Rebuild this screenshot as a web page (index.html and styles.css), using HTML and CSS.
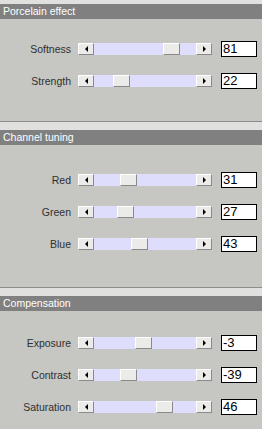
FILE: index.html
```html
<!DOCTYPE html>
<html>
<head>
<meta charset="utf-8">
<link rel="stylesheet" href="styles.css">
</head>
<body>
<div class="panel">
  <div class="band band-top"></div>
  <div class="head">Porcelain effect</div>
  <div class="rows rows-1">
    <div class="row"><span class="label">Softness</span><div class="slider"><span class="btn btn-l"><i class="tri tri-l"></i></span><span class="track"><span class="thumb" style="left:69px"></span></span><span class="btn btn-r"><i class="tri tri-r"></i></span></div><span class="val">81</span></div>
    <div class="row"><span class="label">Strength</span><div class="slider"><span class="btn btn-l"><i class="tri tri-l"></i></span><span class="track"><span class="thumb" style="left:19px"></span></span><span class="btn btn-r"><i class="tri tri-r"></i></span></div><span class="val">22</span></div>
  </div>
  <div class="band"></div>
  <div class="head">Channel tuning</div>
  <div class="rows rows-2">
    <div class="row"><span class="label">Red</span><div class="slider"><span class="btn btn-l"><i class="tri tri-l"></i></span><span class="track"><span class="thumb" style="left:26px"></span></span><span class="btn btn-r"><i class="tri tri-r"></i></span></div><span class="val">31</span></div>
    <div class="row"><span class="label">Green</span><div class="slider"><span class="btn btn-l"><i class="tri tri-l"></i></span><span class="track"><span class="thumb" style="left:23px"></span></span><span class="btn btn-r"><i class="tri tri-r"></i></span></div><span class="val">27</span></div>
    <div class="row"><span class="label">Blue</span><div class="slider"><span class="btn btn-l"><i class="tri tri-l"></i></span><span class="track"><span class="thumb" style="left:37px"></span></span><span class="btn btn-r"><i class="tri tri-r"></i></span></div><span class="val">43</span></div>
  </div>
  <div class="band"></div>
  <div class="head">Compensation</div>
  <div class="rows rows-3">
    <div class="row"><span class="label">Exposure</span><div class="slider"><span class="btn btn-l"><i class="tri tri-l"></i></span><span class="track"><span class="thumb" style="left:41px"></span></span><span class="btn btn-r"><i class="tri tri-r"></i></span></div><span class="val">-3</span></div>
    <div class="row"><span class="label">Contrast</span><div class="slider"><span class="btn btn-l"><i class="tri tri-l"></i></span><span class="track"><span class="thumb" style="left:26px"></span></span><span class="btn btn-r"><i class="tri tri-r"></i></span></div><span class="val">-39</span></div>
    <div class="row"><span class="label">Saturation</span><div class="slider"><span class="btn btn-l"><i class="tri tri-l"></i></span><span class="track"><span class="thumb" style="left:62px"></span></span><span class="btn btn-r"><i class="tri tri-r"></i></span></div><span class="val">46</span></div>
  </div>
</div>
</body>
</html>
```
FILE: styles.css
```css
html, body {
  margin: 0;
  padding: 0;
  background: #c6c6c2;
}
.panel {
  width: 262px;
  height: 429px;
  overflow: hidden;
  font-family: "Liberation Sans", Arial, sans-serif;
  font-size: 10.5px;
  display: flex;
  flex-direction: column;
}
.band {
  height: 8px;
  background: #e0e0de;
  border-top: 1px solid #8c8c8c;
  flex: none;
}
.band-top {
  height: 4px;
  border-top: none;
}
.head {
  height: 15px;
  line-height: 15px;
  background: #808080;
  color: #ffffff;
  padding-left: 3px;
  flex: none;
}
.rows {
  display: flex;
  flex-direction: column;
  gap: 16px;
  flex: none;
}
.rows-1 { padding: 22px 0 32px; }
.rows-2 { padding: 27px 0 35px; }
.rows-3 { padding: 24px 0 0; }
.row {
  height: 16px;
  display: flex;
  align-items: center;
}
.label {
  width: 71px;
  text-align: right;
  color: #303030;
  flex: none;
}
.slider {
  margin-left: 7px;
  height: 12px;
  display: flex;
  flex: none;
}
.btn {
  width: 16px;
  height: 12px;
  box-sizing: border-box;
  background: #ebebe9;
  border-top: 1px solid #ffffff;
  border-left: 1px solid #ffffff;
  border-right: 1px solid #8a8a8a;
  border-bottom: 1px solid #8a8a8a;
  display: flex;
  align-items: center;
  justify-content: center;
}
.tri {
  width: 0;
  height: 0;
  border-top: 3px solid transparent;
  border-bottom: 3px solid transparent;
}
.tri-l { border-right: 3px solid #000; }
.tri-r { border-left: 3px solid #000; }
.track {
  position: relative;
  width: 102px;
  height: 12px;
  background: #dedefc;
}
.thumb {
  position: absolute;
  top: 0;
  width: 17px;
  height: 12px;
  box-sizing: border-box;
  background: #ebebe9;
  border-top: 1px solid #ffffff;
  border-left: 1px solid #ffffff;
  border-right: 1px solid #8a8a8a;
  border-bottom: 1px solid #8a8a8a;
}
.val {
  margin-left: 9px;
  width: 36px;
  height: 16px;
  box-sizing: border-box;
  border: 1px solid #000;
  background: #fff;
  font-size: 13px;
  line-height: 14px;
  padding-left: 1px;
  color: #000;
  flex: none;
}
```
